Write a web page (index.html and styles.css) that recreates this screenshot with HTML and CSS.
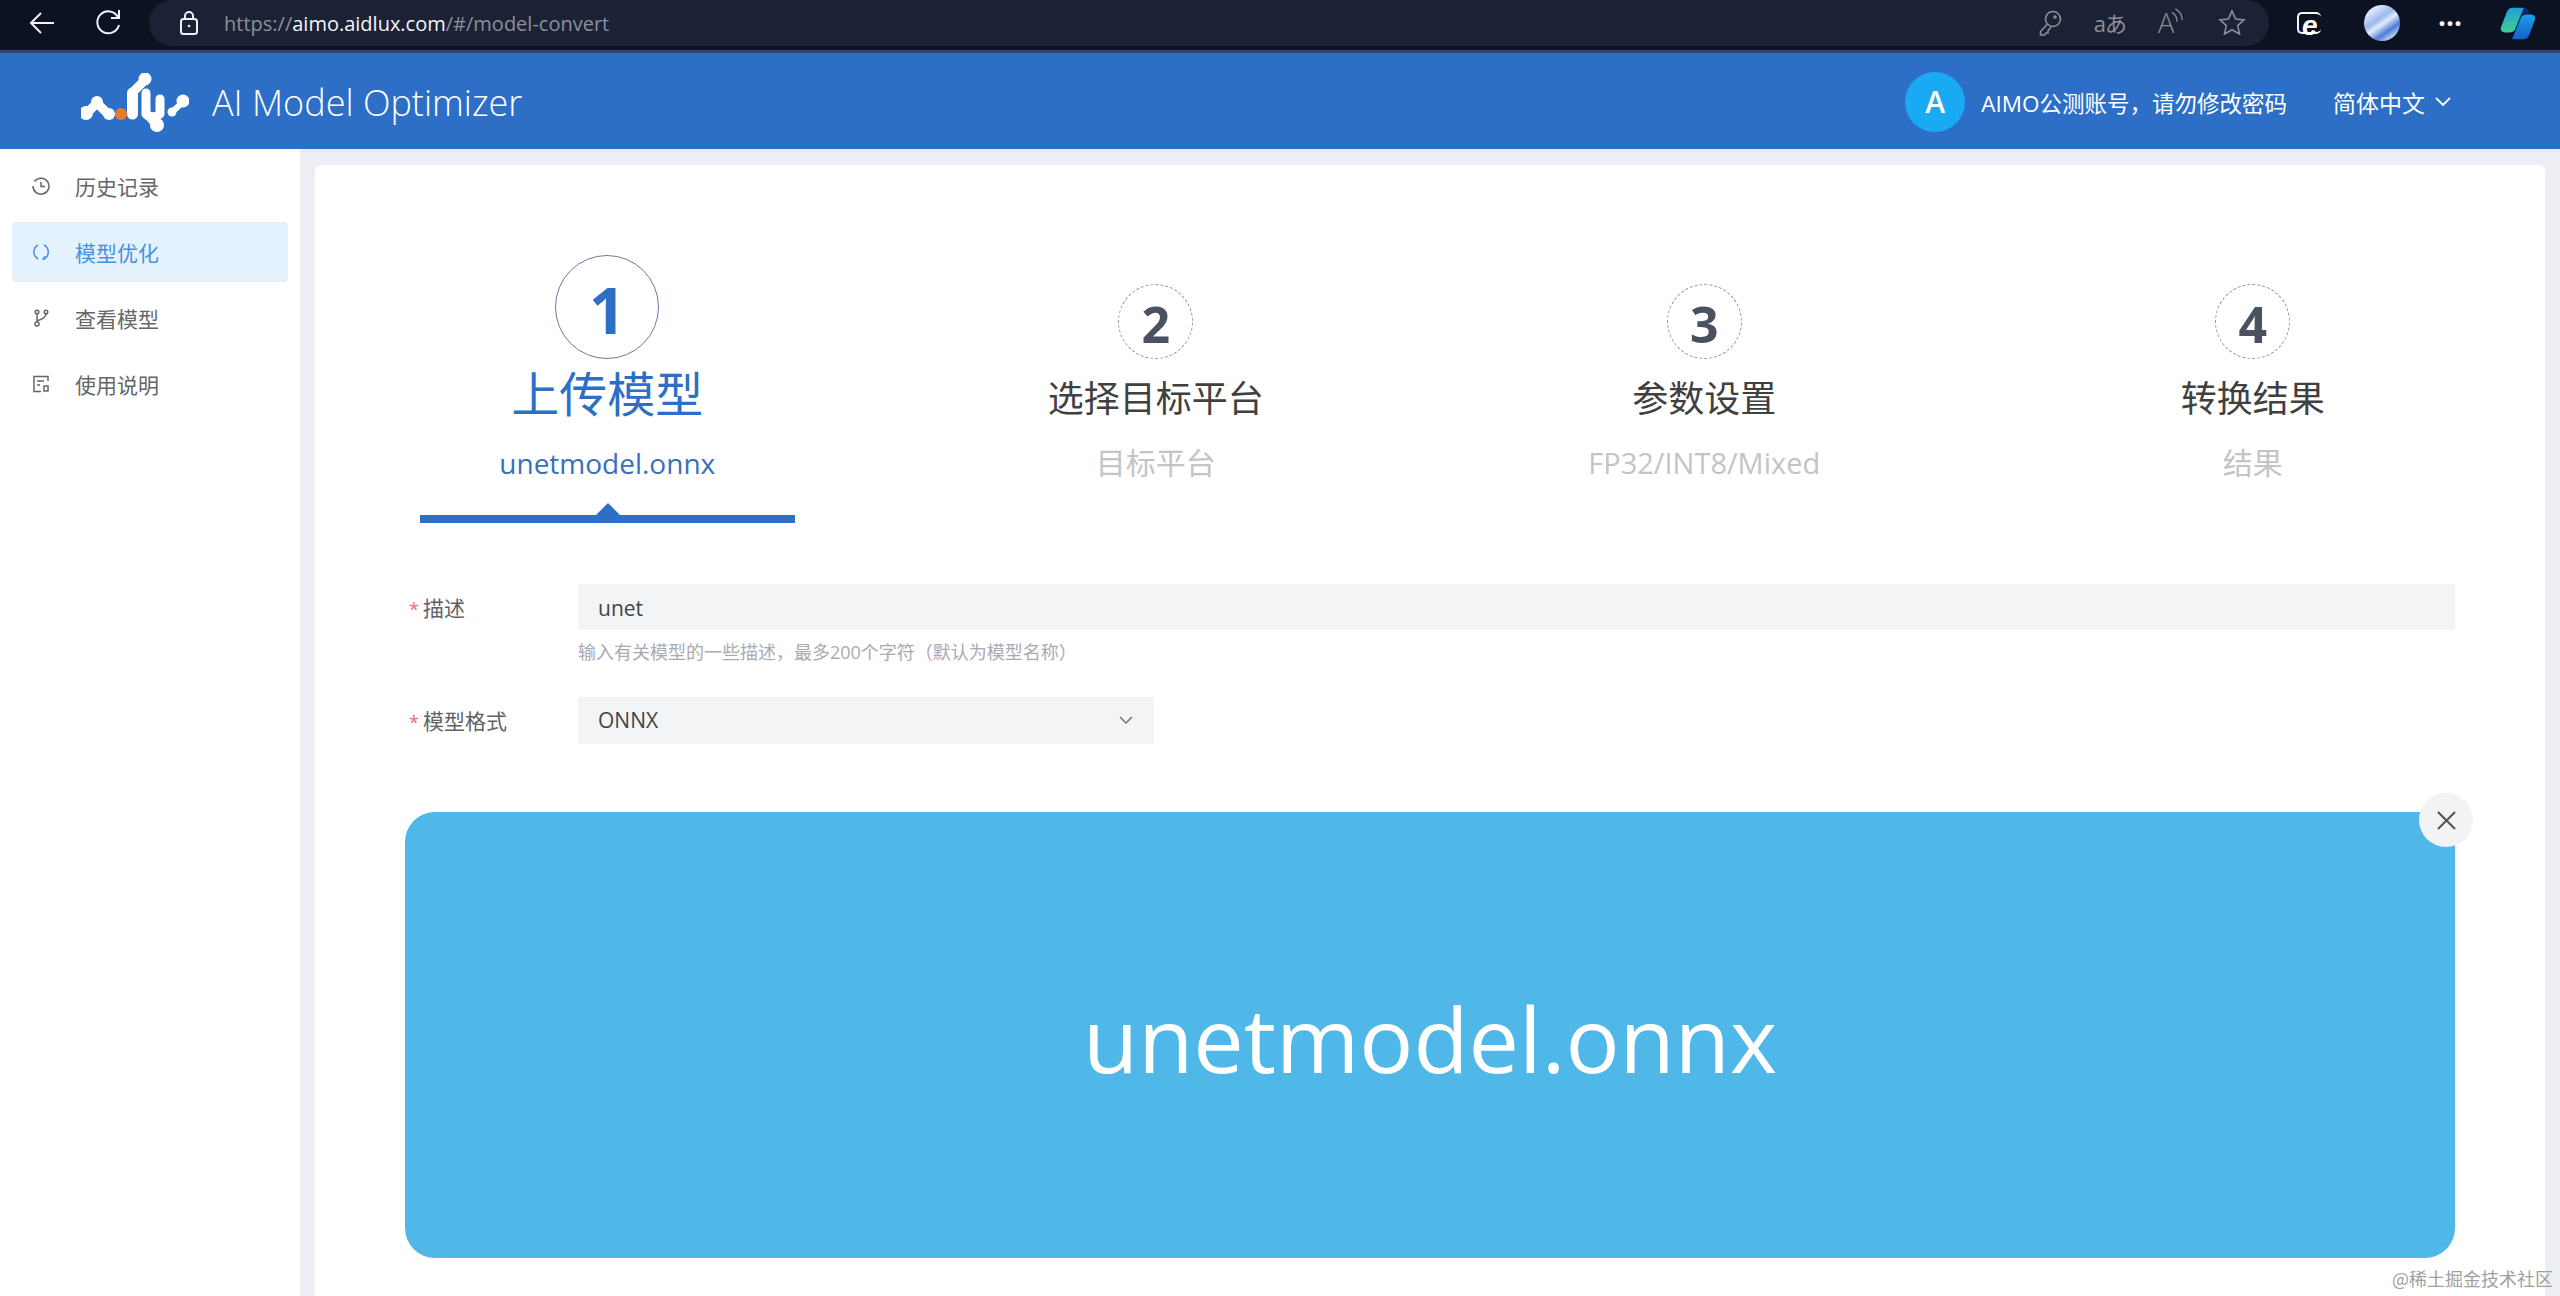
FILE: index.html
```html
<!DOCTYPE html>
<html lang="zh-CN">
<head>
    <meta charset="UTF-8">
    <title>AI Model Optimizer</title>
    <link rel="stylesheet" href="styles.css">
</head>
<body>
    <!-- browser toolbar -->
    <div class="toolbar">
        <svg class="tool-btn back" viewBox="0 0 26 24"><path d="M25 12H2M12 2 2 12l10 10"/></svg>
        <svg class="tool-btn reload" viewBox="0 0 26 28"><path d="M22 5v8h-8" transform="translate(2 -4)"/><path d="M23 8A11 11 0 1 0 24 16"/></svg>
        <div class="omnibox">
            <svg class="lock" viewBox="0 0 20 26"><rect x="2" y="9" width="16" height="15" rx="2.5"/><path d="M6 9V6a4 4 0 0 1 8 0v3"/><circle class="dot" cx="10" cy="16" r="1.3"/></svg>
            <div class="url">https://<b>aimo.aidlux.com</b>/#/model-convert</div>
            <div class="omni-icons">
                <svg class="omni-ico" viewBox="0 0 24 28"><circle cx="15" cy="10" r="7.5"/><path d="M9.5 15 2.500 22.500V26H6.500L8 24H10V22L13 18"/><circle cx="17" cy="8" r="1"/></svg>
                <span class="omni-text">aあ</span>
                <span class="read-aloud">A<svg viewBox="0 0 14 22"><path d="M1 5q6 3 6 11M5 1q8 4 8 13"/></svg></span>
                <svg class="omni-ico star" viewBox="0 0 28 28"><path d="m14 2 3.600 8 8.400.9-6.300 5.700 1.800 8.400-7.500-4.300L6.500 25l1.800-8.400L2 10.900l8.400-.9z"/></svg>
            </div>
        </div>
        <div class="browser-icons">
            <span class="edge-ico"><i>e</i></span>
            <span class="profile"></span>
            <span class="more">···</span>
            <svg class="copilot" viewBox="0 0 36 44" preserveAspectRatio="none">
                <defs>
                    <linearGradient id="copA" x1="0" y1="0" x2="0" y2="1"><stop offset="0" stop-color="#1f9fd8"/><stop offset="1" stop-color="#3ecf8e"/></linearGradient>
                    <linearGradient id="copB" x1="0" y1="0" x2="0" y2="1"><stop offset="0" stop-color="#1b9fe8"/><stop offset="1" stop-color="#1560c8"/></linearGradient>
                </defs>
                <path fill="url(#copA)" d="M12 1h12L15 30c-1 3-3 4-6 4H6C2 34 0 31 1 27L7 6c1-3 3-5 5-5z"/>
                <path fill="url(#copB)" d="M24 43H12l9-29c1-3 3-4 6-4h3c4 0 6 3 5 7l-6 21c-1 3-3 5-5 5z"/>
                <path fill="#123c9c" d="M24 1c3 0 5 2 5 6l-1 3h-4c-2 0-3 1-4 3l-3 8z" opacity=".55"/>
            </svg>
        </div>
    </div>

    <header class="header">
        <svg class="logo" viewBox="81 72 108 60">
            <path class="logo-stroke" d="M87 112 97 102 108 113"/>
            <circle class="logo-dot" cx="86" cy="112" r="7"/>
            <circle class="logo-dot" cx="97" cy="101" r="6"/>
            <circle class="logo-dot" cx="109" cy="113" r="6"/>
            <circle class="logo-orange" cx="121" cy="113" r="6"/>
            <path class="logo-stroke thick" d="M132.500 113V92"/>
            <path class="logo-stroke" d="M133 91 145 79"/>
            <circle class="logo-dot" cx="145" cy="78" r="6.500"/>
            <path class="logo-stroke" d="M146 92V112L157 124"/>
            <circle class="logo-dot" cx="157" cy="124" r="7"/>
            <path class="logo-stroke" d="M146 113Q152 119 160 113V98"/>
            <path class="logo-stroke thin" d="M172 111 183 101"/>
            <circle class="logo-dot" cx="172" cy="111" r="4.500"/>
            <circle class="logo-dot" cx="183" cy="100" r="6.500"/>
        </svg>
        <div class="app-title">AI Model Optimizer</div>
        <div class="user">
            <span class="avatar">A</span>
            <span class="user-name">AIMO公测账号，请勿修改密码</span>
            <span class="lang">简体中文</span>
            <svg class="lang-arrow" viewBox="0 0 16 10"><path d="m1 1 7 7 7-7"/></svg>
        </div>
    </header>

    <div class="main">
        <nav class="sidebar">
            <a class="menu-item">
                <svg class="menu-ico" viewBox="0 0 18 18"><path d="M2.500 4.500A8 8 0 1 1 1 9M9 5v4.500h4"/></svg>历史记录
            </a>
            <a class="menu-item active">
                <svg class="menu-ico" viewBox="0 0 18 18"><path d="M6 2a8 8 0 0 0 0 14M12 2a8 8 0 0 1 1 13.500M12.500 13v3h-2.500"/></svg>模型优化
            </a>
            <a class="menu-item">
                <svg class="menu-ico" viewBox="0 0 18 18"><circle cx="5" cy="15" r="2"/><circle cx="5" cy="3" r="1.800"/><circle cx="14" cy="3" r="1.800"/><path d="M5 5v8M14 5q0 4-9 7"/></svg>查看模型
            </a>
            <a class="menu-item">
                <svg class="menu-ico" viewBox="0 0 18 18"><path d="M16 6V1.500H2v15h7M5 6h7M5 10h3"/><path d="M12 11h4v5h-4z"/></svg>使用说明
            </a>
        </nav>

        <div class="content">
            <div class="card">
                <div class="steps">
                    <div class="step active">
                        <div class="step-num">1</div>
                        <div class="step-title">上传模型</div>
                        <div class="step-sub small">unetmodel.onnx</div>
                        <div class="step-bar"></div>
                    </div>
                    <div class="step">
                        <div class="step-num">2</div>
                        <div class="step-title">选择目标平台</div>
                        <div class="step-sub">目标平台</div>
                        <div class="step-bar"></div>
                    </div>
                    <div class="step">
                        <div class="step-num">3</div>
                        <div class="step-title">参数设置</div>
                        <div class="step-sub latin">FP32/INT8/Mixed</div>
                        <div class="step-bar"></div>
                    </div>
                    <div class="step">
                        <div class="step-num">4</div>
                        <div class="step-title">转换结果</div>
                        <div class="step-sub">结果</div>
                        <div class="step-bar"></div>
                    </div>
                </div>

                <div class="form-row">
                    <label class="form-label"><span class="req">*</span>描述</label>
                    <div class="form-field">
                        <div class="input">unet</div>
                        <div class="hint">输入有关模型的一些描述，最多200个字符（默认为模型名称）</div>
                    </div>
                </div>
                <div class="form-row select-row">
                    <label class="form-label"><span class="req">*</span>模型格式</label>
                    <div class="select">
                        ONNX
                        <svg class="select-arrow" viewBox="0 0 14 9"><path d="m1 1 6 6 6-6"/></svg>
                    </div>
                </div>

                <div class="file-box">
                    <span class="file-name">unetmodel.onnx</span>
                    <span class="file-close">
                        <svg viewBox="0 0 20 20"><path d="m1 1 18 18M19 1 1 19"/></svg>
                    </span>
                </div>
            </div>
        </div>
    </div>

    <div class="watermark">@稀土掘金技术社区</div>
</body>
</html>
```

FILE: styles.css
```css
* {
    box-sizing: border-box;
}
html, body {
    height: 100%;
}
body {
    margin: 0;
    overflow: hidden;
    display: flex;
    flex-direction: column;
    background-color: #f0f2f5;
    font-family: "Open Sans", "Noto Sans CJK SC", sans-serif;
    color: #606266;
}

/* browser toolbar */
.toolbar {
    height: 53px;
    flex: none;
    display: flex;
    align-items: flex-start;
    background-color: #0c1222;
    border-bottom: 3px solid #34466b;
}
.tool-btn {
    fill: none;
    stroke: #f2f3f6;
    stroke-width: 2;
}
.back {
    width: 26px;
    height: 24px;
    margin: 11px 0 0 29px;
}
.reload {
    width: 26px;
    height: 28px;
    margin: 9px 0 0 40px;
}
.omnibox {
    width: 2120px;
    height: 46px;
    margin-left: 28px;
    padding: 0 23px 0 30px;
    display: flex;
    align-items: center;
    background-color: #1c2236;
    border-radius: 23px;
}
.lock {
    width: 20px;
    height: 26px;
    margin-right: 25px;
    fill: none;
    stroke: #eef0f4;
    stroke-width: 2;
}
.lock .dot {
    fill: #eef0f4;
    stroke: none;
}
.url {
    font-size: 20px;
    color: #8b8f9b;
}
.url b {
    font-weight: 400;
    color: #f4f5f7;
}
.omni-icons {
    margin-left: auto;
    display: flex;
    align-items: center;
    gap: 32px;
    color: #8b8f9b;
}
.omni-ico {
    width: 24px;
    height: 28px;
    fill: none;
    stroke: #8b8f9b;
    stroke-width: 1.6;
}
.star {
    width: 28px;
}
.omni-text {
    font-size: 22px;
    line-height: 28px;
    letter-spacing: -1px;
}
.read-aloud {
    display: flex;
    width: 28px;
    font-size: 27px;
    line-height: 30px;
    font-weight: 300;
}
.read-aloud svg {
    width: 12px;
    height: 19px;
    margin-left: -3px;
    fill: none;
    stroke: #8b8f9b;
    stroke-width: 1.5;
}
.browser-icons {
    flex: 1;
    height: 46px;
    display: flex;
    align-items: center;
    padding-left: 28px;
}
.edge-ico {
    width: 24px;
    height: 22px;
    border: 2px solid #f4f5f7;
    border-right: none;
    border-radius: 5px;
    position: relative;
}
.edge-ico i {
    position: absolute;
    left: 3px;
    top: -4px;
    font: italic 700 28px/32px "Liberation Sans", sans-serif;
    color: #fff;
}
.profile {
    width: 36px;
    height: 36px;
    margin-left: 43px;
    border-radius: 50%;
    background: linear-gradient(145deg, #e4ecfa 15%, #9db8ee 40%, #e2ecfb 52%, #4f7bd8 70%, #cfe0f8 88%);
}
.more {
    margin-left: 38px;
    font-size: 28px;
    font-weight: 700;
    line-height: 30px;
    color: #f4f5f7;
}
.copilot {
    width: 36px;
    height: 33px;
    margin-left: 38px;
}

/* app header */
.header {
    height: 96px;
    flex: none;
    display: flex;
    align-items: center;
    padding: 2px 109px 0 81px;
    background-color: #2d6fc7;
    color: #fff;
}
.logo {
    width: 108px;
    height: 60px;
    margin-top: 2px;
}
.logo-stroke {
    fill: none;
    stroke: #fff;
    stroke-width: 9;
    stroke-linecap: round;
    stroke-linejoin: round;
}
.logo-stroke.thick {
    stroke-width: 11;
}
.logo-stroke.thin {
    stroke-width: 6;
}
.logo-dot {
    fill: #fff;
}
.logo-orange {
    fill: #e8792c;
}
.app-title {
    margin-left: 23px;
    font-size: 36px;
    font-weight: 300;
}
.user {
    margin-left: auto;
    display: flex;
    align-items: center;
}
.avatar {
    width: 60px;
    height: 60px;
    border-radius: 50%;
    background-color: #1aa9f3;
    font-size: 30px;
    font-weight: 600;
    line-height: 60px;
    text-align: center;
}
.user-name {
    margin-left: 16px;
    font-size: 22.5px;
}
.lang {
    margin-left: 46px;
    font-size: 23px;
}
.lang-arrow {
    width: 16px;
    height: 10px;
    margin-left: 10px;
    fill: none;
    stroke: #fff;
    stroke-width: 1.8;
}

/* layout */
.main {
    flex: 1;
    min-height: 0;
    display: flex;
}
.sidebar {
    width: 300px;
    flex: none;
    padding: 7px 12px;
    display: flex;
    flex-direction: column;
    gap: 6px;
    background-color: #fff;
}
.menu-item {
    height: 60px;
    display: flex;
    align-items: center;
    padding-left: 20px;
    border-radius: 4px;
    font-size: 21px;
    color: #666;
}
.menu-item.active {
    background-color: #e3f2fd;
    color: #4a90e2;
}
.menu-ico {
    width: 18px;
    height: 18px;
    margin-right: 25px;
    fill: none;
    stroke: currentColor;
    stroke-width: 1.5;
}
.content {
    flex: 1;
    min-width: 0;
    padding: 16px 15px 0;
    background-color: #eceef3;
}
.card {
    height: 100%;
    padding: 90px 90px 0;
    background-color: #fff;
    border-radius: 6px 6px 0 0;
}

/* steps */
.steps {
    margin: 0 -72px 61px;
    display: grid;
    grid-template-columns: repeat(4, 1fr);
}
.step {
    display: flex;
    flex-direction: column;
    justify-content: flex-end;
    align-items: center;
}
.step-num {
    width: 75px;
    height: 75px;
    border: 1px dashed #8a8f99;
    border-radius: 50%;
    font-size: 50px;
    font-weight: 700;
    line-height: 79px;
    text-align: center;
    color: #4a5160;
}
.step-title {
    height: 70px;
    padding-top: 9px;
    font-size: 36px;
    line-height: 62px;
    color: #404040;
}
.step-sub {
    height: 60px;
    margin-top: 4px;
    font-size: 30px;
    line-height: 60px;
    color: #c4c4c4;
}
.step-sub.small {
    font-size: 28px;
}
.step-sub.latin {
    font-size: 29px;
}
.step-bar {
    height: 8px;
    margin-top: 22px;
}
.step.active .step-num {
    width: 104px;
    height: 104px;
    border: 1.5px solid #6a7aa8;
    font-size: 64px;
    line-height: 107px;
    color: #2d6fc7;
}
.step.active .step-title {
    padding-top: 0;
    font-size: 48px;
    line-height: 70px;
    color: #2d6fc7;
}
.step.active .step-sub {
    color: #3a6fbe;
}
.step.active .step-bar {
    position: relative;
    width: 375px;
    background-color: #2d6fc7;
}
.step.active .step-bar::before {
    content: "";
    position: absolute;
    left: 176px;
    top: -12px;
    border: 12px solid transparent;
    border-top: none;
    border-bottom-color: #2d6fc7;
}

/* form */
.form-row {
    display: flex;
}
.select-row {
    margin-top: 32px;
}
.form-label {
    width: 173px;
    flex: none;
    padding: 1px 0 0 4px;
    font-size: 21px;
    line-height: 46px;
    color: #606266;
}
.req {
    display: inline-block;
    width: 14px;
    font-size: 18px;
    color: #f56c6c;
}
.form-field {
    flex: 1;
}
.input, .select {
    padding-left: 20px;
    background-color: #f3f4f6;
    font-size: 21px;
    color: #444;
}
.input {
    height: 46px;
    line-height: 48px;
}
.select {
    position: relative;
    width: 576px;
    height: 47px;
    line-height: 47px;
}
.select-arrow {
    position: absolute;
    right: 21px;
    top: 19px;
    width: 14px;
    height: 9px;
    fill: none;
    stroke: #707070;
    stroke-width: 1.5;
}
.hint {
    margin-top: 9px;
    font-size: 18px;
    line-height: 26px;
    color: #a8abb2;
}
.file-box {
    position: relative;
    height: 446px;
    margin-top: 67px;
    display: flex;
    align-items: center;
    justify-content: center;
    background-color: #4fb8e8;
    border-radius: 30px;
}
.file-name {
    margin-top: 6px;
    font-size: 90px;
    font-weight: 400;
    color: #fff;
}
.file-close {
    position: absolute;
    right: -18px;
    top: -19px;
    width: 54px;
    height: 54px;
    display: flex;
    align-items: center;
    justify-content: center;
    border-radius: 50%;
    background-color: #f2f3f5;
}
.file-close svg {
    width: 19px;
    height: 19px;
    fill: none;
    stroke: #555;
    stroke-width: 2.2;
}
.watermark {
    position: absolute;
    right: 7px;
    bottom: 5px;
    font-family: "Noto Sans CJK SC", sans-serif;
    font-size: 18px;
    color: #a0a0a0;
}
```
